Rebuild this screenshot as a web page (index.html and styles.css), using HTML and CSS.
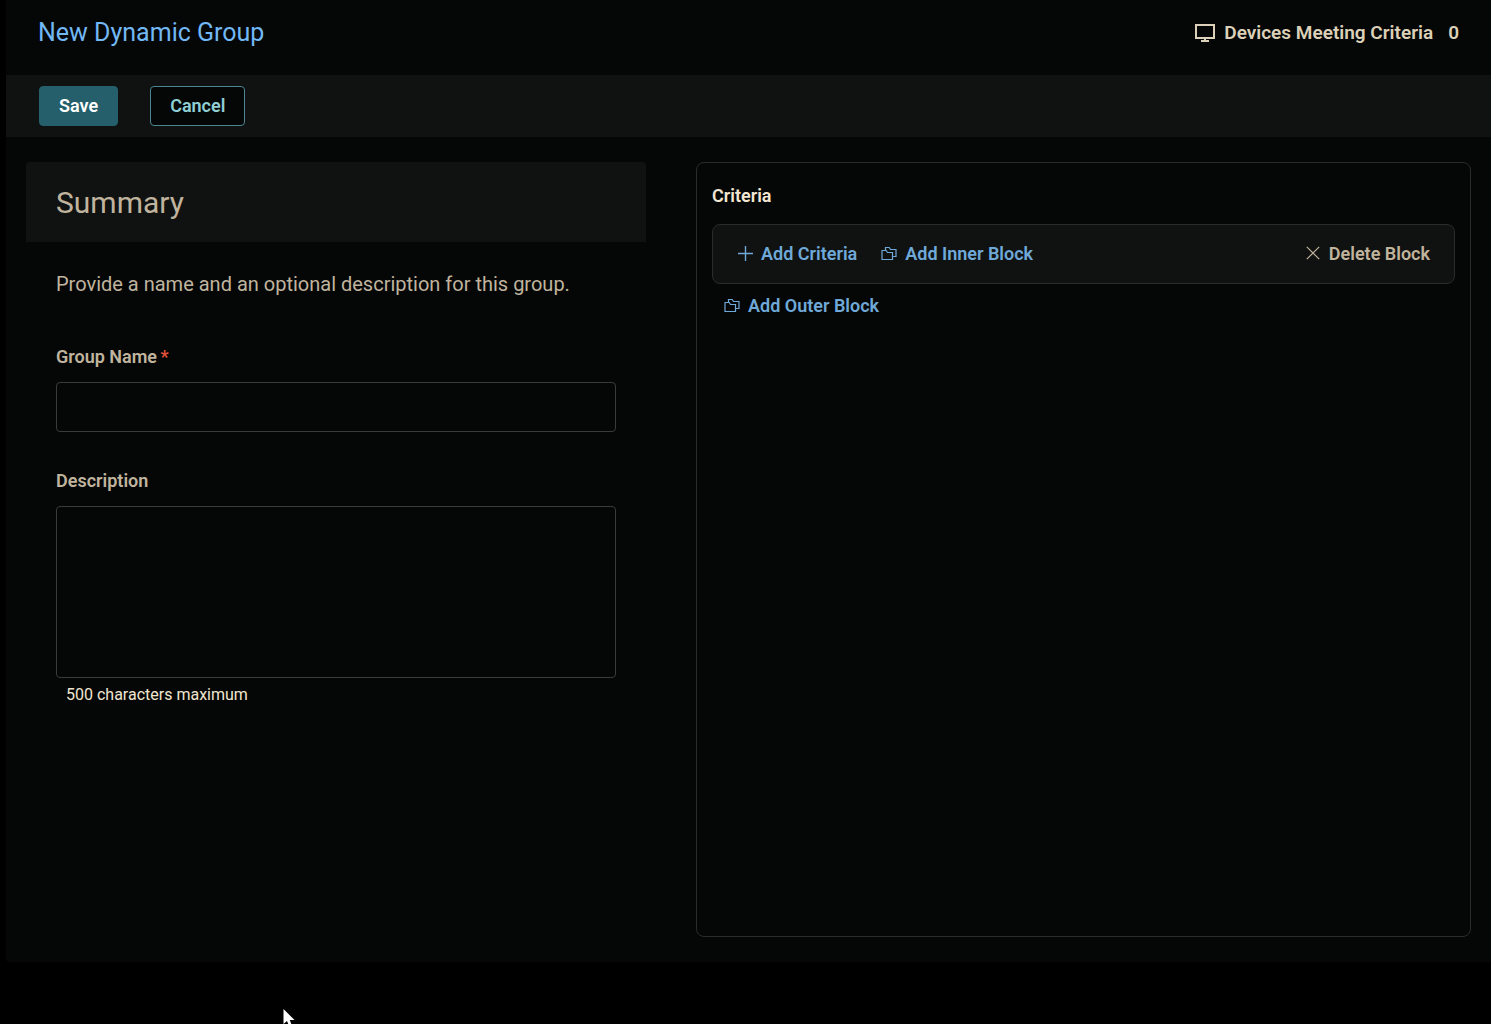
FILE: index.html
```html
<!DOCTYPE html>
<html lang="en">
<head>
    <meta charset="UTF-8">
    <meta name="viewport" content="width=device-width, initial-scale=1.0">
    <title>New Dynamic Group</title>
    <link rel="stylesheet" href="styles.css">
</head>
<body>
    <!-- Shared icons -->
    <svg class="icon-defs" aria-hidden="true">
        <symbol id="icon-folders" viewBox="0 0 16 16">
            <path d="M1 4.5H5.2L6.5 6.5H11.5V13.5H1ZM4.5 4.5V1.5H8.2L9.5 3.5H15V10.5H11.5" fill="none" stroke="currentColor" stroke-width="1.2"/>
        </symbol>
    </svg>

    <div class="app">
        <header class="page-header">
            <h1>New Dynamic Group</h1>
            <div class="device-count">
                <svg class="icon-monitor" viewBox="0 0 20 20" aria-hidden="true">
                    <path d="M1 2H19V15H1Z" fill="none" stroke="currentColor" stroke-width="2"/>
                    <path d="M9 15H11V17H14V19H6V17H9Z" fill="currentColor"/>
                </svg>
                <span>Devices Meeting Criteria</span>
                <span class="count">0</span>
            </div>
        </header>

        <div class="toolbar">
            <button type="submit" form="group-form" class="btn btn-save">Save</button>
            <button type="button" class="btn btn-cancel">Cancel</button>
        </div>

        <main>
            <form id="group-form" class="summary">
                <h2>Summary</h2>
                <div class="summary-body">
                    <p class="intro">Provide a name and an optional description for this group.</p>

                    <label for="group-name">Group Name <span class="required">*</span></label>
                    <input type="text" id="group-name" name="name" required>

                    <label for="description">Description</label>
                    <textarea id="description" name="description" maxlength="500"></textarea>
                    <p class="hint">500 characters maximum</p>
                </div>
            </form>

            <section class="criteria">
                <h3>Criteria</h3>
                <div class="block">
                    <button type="button" class="link-btn">
                        <svg class="icon" viewBox="0 0 16 16" aria-hidden="true">
                            <path d="M8.5 0V15M1 7.5H16" fill="none" stroke="currentColor" stroke-width="1.4"/>
                        </svg>
                        Add Criteria
                    </button>
                    <button type="button" class="link-btn">
                        <svg class="icon" aria-hidden="true"><use href="#icon-folders"/></svg>
                        Add Inner Block
                    </button>
                    <button type="button" class="link-btn delete">
                        <svg class="icon" viewBox="0 0 16 16" aria-hidden="true">
                            <path d="M1.8 0.8L14.2 13.2M14.2 0.8L1.8 13.2" fill="none" stroke="currentColor" stroke-width="1.2"/>
                        </svg>
                        Delete Block
                    </button>
                </div>
                <button type="button" class="link-btn outer">
                    <svg class="icon" aria-hidden="true"><use href="#icon-folders"/></svg>
                    Add Outer Block
                </button>
            </section>
        </main>
    </div>

    <svg class="pointer" viewBox="0 0 12 19" aria-hidden="true">
        <path d="M0.5 0V15L4 12L6.5 18L9 17L6.8 11H11.5Z" fill="#fff"/>
    </svg>
</body>
</html>
```

FILE: styles.css
```css
* {
    box-sizing: border-box;
}

body {
    font-family: Roboto, sans-serif;
    font-size: 18px;
    line-height: 24px;
    margin: 0;
    padding: 0 0 62px 6px;
    min-height: 100vh;
    display: flex;
    flex-direction: column;
    position: relative;
    overflow: hidden;
    background-color: #000;
    color: #c0b49e;
}

h1, h2, h3, p {
    margin: 0;
}

.icon-defs {
    position: absolute;
    width: 0;
    height: 0;
}

.app {
    flex: 1;
    display: flex;
    flex-direction: column;
    background-color: #040706;
    border-radius: 0 0 0 4px;
}

.page-header {
    display: flex;
    justify-content: space-between;
    align-items: center;
    height: 75px;
    padding: 0 32px 10px;
}

.page-header h1 {
    font-size: 25px;
    font-weight: 400;
    color: #72b8f5;
}

.device-count {
    display: flex;
    align-items: center;
    gap: 9px;
    font-weight: 600;
    font-size: 19px;
    color: #dcd1b8;
}

.icon-monitor {
    width: 20px;
    height: 20px;
}

.count {
    margin-left: 6px;
}

.toolbar {
    display: flex;
    align-items: center;
    gap: 32px;
    height: 62px;
    padding: 0 33px;
    background-color: #101211;
}

.btn {
    height: 40px;
    padding: 0 19px 2px;
    font-family: inherit;
    font-size: 18px;
    font-weight: 600;
    border: 1px solid #255f6b;
    border-radius: 4px;
}

.btn-save {
    background-color: #255f6b;
    color: #fff;
}

.btn-cancel {
    background-color: #040706;
    border-color: #4a8791;
    color: #90cfd4;
}

main {
    flex: 1;
    display: grid;
    grid-template-columns: 4fr 5fr;
    gap: 50px;
    padding: 25px 20px;
}

.summary h2 {
    padding: 21px 30px 19px;
    font-size: 30px;
    font-weight: 400;
    line-height: 40px;
    background-color: #101211;
    border-radius: 4px 4px 0 0;
}

.summary-body {
    display: flex;
    flex-direction: column;
    padding: 30px;
}

.intro {
    margin-bottom: 49px;
    font-size: 20px;
}

label {
    margin-bottom: 13px;
    font-weight: 600;
}

.required {
    margin-left: -1px;
    color: #e5513b;
}

input, textarea {
    background-color: transparent;
    border: 1px solid #3a3c3b;
    border-radius: 4px;
    padding: 12px;
    color: #f1e5d0;
    font: inherit;
}

input {
    height: 50px;
    margin-bottom: 37px;
}

textarea {
    height: 172px;
    resize: none;
}

.hint {
    padding: 5px 10px;
    font-size: 16px;
    color: #f1e5d0;
}

.criteria {
    padding: 21px 15px;
    border: 1px solid #2a2c2b;
    border-radius: 8px;
}

.criteria h3 {
    margin-bottom: 16px;
    font-size: 18px;
    font-weight: 600;
    color: #f3e6d3;
}

.block {
    display: flex;
    align-items: center;
    gap: 24px;
    height: 60px;
    padding: 0 24px;
    background-color: #101211;
    border: 1px solid #2a2c2b;
    border-radius: 8px;
}

.link-btn {
    display: flex;
    align-items: center;
    gap: 8px;
    padding: 0;
    border: none;
    background: none;
    font: inherit;
    font-weight: 600;
    color: #6fa9d9;
}

.icon {
    width: 16px;
    height: 16px;
}

.delete {
    margin-left: auto;
    color: #c0b49e;
}

.outer {
    margin: 10px 12px;
}

.pointer {
    position: absolute;
    left: 283px;
    top: calc(100vh - 15px);
    width: 12px;
    height: 19px;
}
```
